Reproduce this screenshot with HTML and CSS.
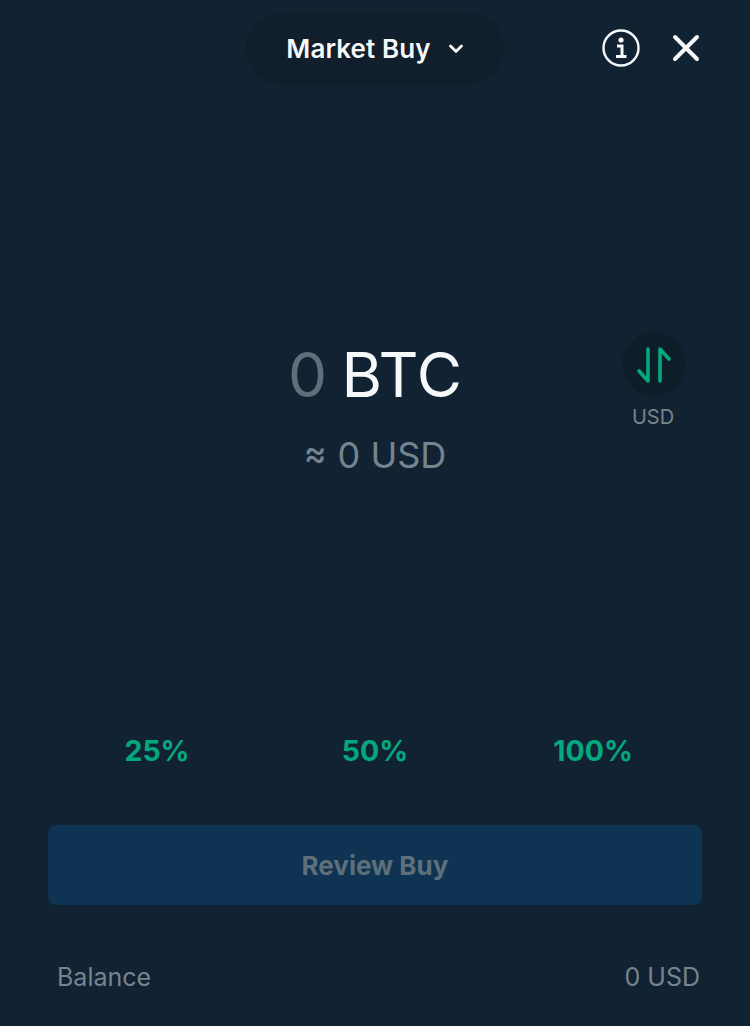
FILE: index.html

```html
<!DOCTYPE html>
<html lang="en">
<head>
  <meta charset="UTF-8" />
  <meta name="viewport" content="width=device-width, initial-scale=1" />
  <title>Market Buy</title>
  <link rel="stylesheet" href="styles.css">
</head>
<body>
  <div class="screen">
    <header class="top-bar">
      <div class="mode-pill">
        <span>Market Buy</span>
        <svg class="chevron" width="16" height="12" viewBox="0 0 16 12"><path d="M2.500 3 8 8.500 13.500 3" fill="none" stroke="#f7f8fa" stroke-width="2.800" stroke-linecap="round" stroke-linejoin="round"/></svg>
      </div>
      <div class="top-icons">
        <svg width="38" height="38" viewBox="0 0 38 38"><circle cx="19" cy="19" r="17.500" fill="none" stroke="#f7f8fa" stroke-width="2.400"/><circle cx="19" cy="11" r="2.600" fill="#f7f8fa"/><path d="M15 17h5v10M14 27.500h10.500" fill="none" stroke="#f7f8fa" stroke-width="3"/></svg>
        <svg width="30" height="30" viewBox="0 0 30 30"><path d="M4 4l22 22M26 4 4 26" fill="none" stroke="#f7f8fa" stroke-width="4" stroke-linecap="round"/></svg>
      </div>
    </header>

    <section class="amount">
      <div class="amount-main"><span class="zero">0</span> BTC</div>
      <div class="amount-sub"><span class="approx">≈</span> 0 USD</div>
      <div class="swap">
        <div class="swap-btn">
          <svg width="64" height="64" viewBox="0 0 64 64"><path d="M17 39l9 10V17M38 49V17l9 10" fill="none" stroke="#04a87f" stroke-width="3.600" stroke-linecap="round" stroke-linejoin="round"/></svg>
        </div>
        <span class="swap-label">USD</span>
      </div>
    </section>

    <div class="percents">
      <span>25%</span>
      <span>50%</span>
      <span>100%</span>
    </div>

    <button class="review-btn">Review Buy</button>

    <div class="balance">
      <span class="balance-label">Balance</span>
      <span>0 USD</span>
    </div>
  </div>
</body>
</html>
```

FILE: styles.css

```css
html, body { margin: 0; background: #112333; }

body {
  font-family: Inter, "Liberation Sans", sans-serif;
  color: #f7f8fa;
}

.screen {
  width: 750px;
  height: 1026px;
  overflow: hidden;
  display: flex;
  flex-direction: column;
  box-sizing: border-box;
  padding-top: 12px;
}

.top-bar {
  position: relative;
  display: flex;
  justify-content: center;
  height: 73px;
}

.mode-pill {
  width: 258px;
  height: 73px;
  border-radius: 37px;
  background: #111e2b;
  display: flex;
  align-items: center;
  justify-content: center;
  gap: 17px;
  font-size: 26px;
  font-weight: 600;
  letter-spacing: 0.1px;
}

.chevron { margin-top: 1px; }

.top-icons {
  position: absolute;
  top: 17px;
  left: 602px;
  display: flex;
  align-items: center;
  gap: 31px;
}

.amount {
  position: relative;
  margin-top: 254px;
  text-align: center;
  height: 411px;
}

.amount-main {
  font-size: 62px;
  line-height: 72px;
  font-weight: 400;
  word-spacing: -3px;
}

.zero { color: #5d6f79; }

.amount-sub {
  margin-top: 21px;
  font-size: 36px;
  line-height: 42px;
  color: #76848e;
}

.approx {
  font-size: 34px;
  font-weight: 500;
  vertical-align: 3px;
  margin-right: 1px;
}

.swap {
  position: absolute;
  top: -7px;
  left: 621px;
  width: 64px;
  display: flex;
  flex-direction: column;
  align-items: center;
}

.swap-btn {
  width: 64px;
  height: 64px;
  margin-left: 2px;
  border-radius: 50%;
  background: #0e1e29;
}

.swap-btn svg { display: block; }

.swap-label {
  margin-top: 10px;
  font-size: 20px;
  line-height: 22px;
  color: #76848e;
}

.percents {
  display: grid;
  grid-template-columns: 218px 218px 218px;
  padding-left: 48px;
  margin-top: -16px;
  text-align: center;
  font-size: 28.500px;
  line-height: 34px;
  font-weight: 700;
  color: #04a87f;
}

.review-btn {
  display: block;
  width: 654px;
  height: 80px;
  margin: 57px 0 0 48px;
  border: none;
  border-radius: 8px;
  background: #0f3352;
  color: #5d6f79;
  font-family: inherit;
  font-size: 26px;
  font-weight: 700;
}

.balance {
  display: flex;
  justify-content: space-between;
  margin: 56px 50px 0 57px;
  font-size: 25px;
  line-height: 32px;
  color: #76848e;
}
```
